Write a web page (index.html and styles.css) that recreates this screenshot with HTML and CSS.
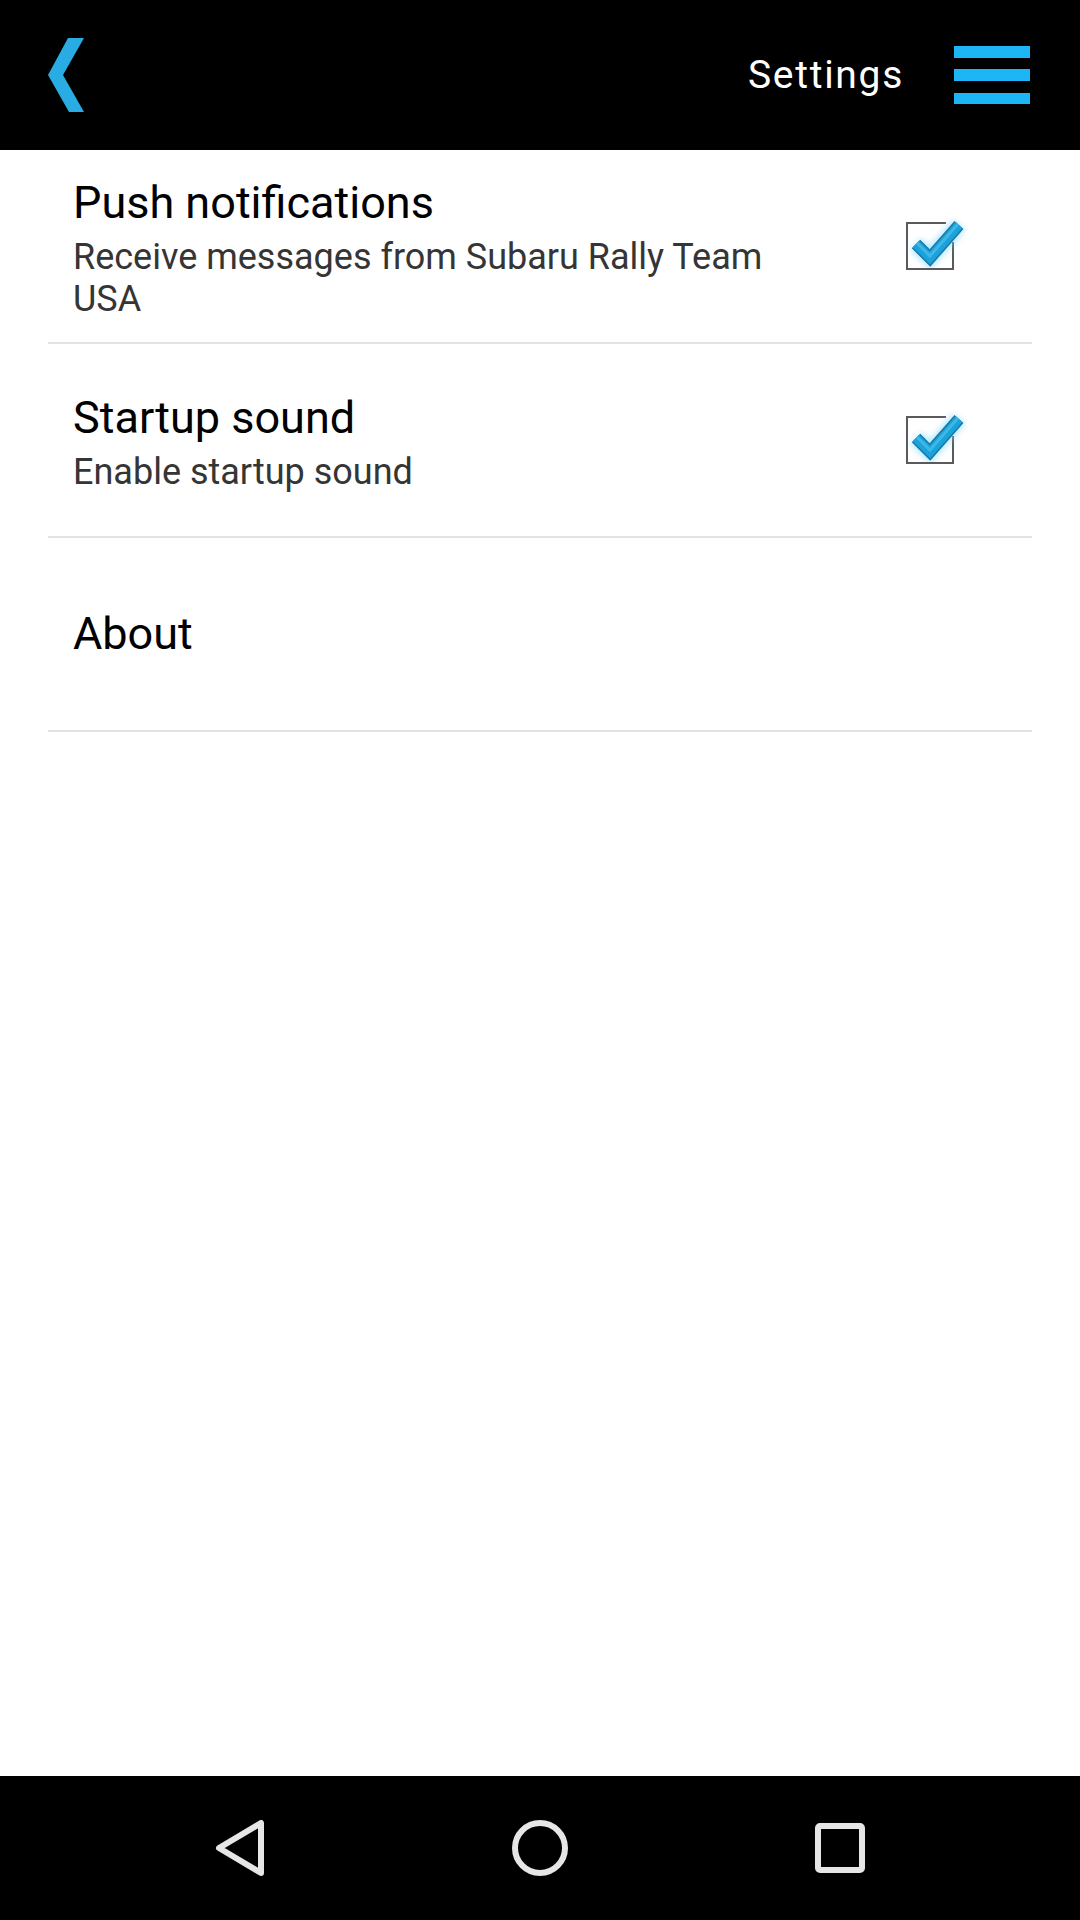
FILE: index.html
```html
<!doctype html>
<html>
  <head>
    <title>Settings</title>
    <meta name="viewport" content="initial-scale=1, maximum-scale=1">
    <link rel="stylesheet" href="styles.css">
  </head>
  <body>
    <div class=bar>
      <svg class=back width=40 height=80 viewBox="0 0 40 80">
        <polygon points="22,3 38,3 17,40 38,77 23,77 2,40" fill="#28ace3"/>
      </svg>
      <span class=title>Settings</span>
      <svg class=menu width=76 height=58 viewBox="0 0 76 58">
        <rect x=0 y=0 width=76 height=12 fill="#1cb5f6"/>
        <rect x=0 y=23 width=76 height=12 fill="#1cb5f6"/>
        <rect x=0 y=47 width=76 height=11 fill="#1cb5f6"/>
      </svg>
    </div>

    <div class=list>
      <div class=row>
        <div class=text>
          <div class=name>Push notifications</div>
          <div class=sub>Receive messages from Subaru Rally Team USA</div>
        </div>
        <svg class=check width=64 height=60 viewBox="0 0 64 60">
          <use href="#tick"/>
        </svg>
      </div>
      <div class=row>
        <div class=text>
          <div class=name>Startup sound</div>
          <div class=sub>Enable startup sound</div>
        </div>
        <svg class=check width=64 height=60 viewBox="0 0 64 60">
          <use href="#tick"/>
        </svg>
      </div>
      <div class=row>
        <div class=text>
          <div class=name>About</div>
        </div>
      </div>
    </div>

    <div class=nav>
      <svg width=56 height=56 viewBox="0 0 56 56">
        <polygon points="7,28 49,3 49,53" fill=none stroke="#e6e6e6" stroke-width=6 stroke-linejoin=round />
      </svg>
      <svg width=56 height=56 viewBox="0 0 56 56">
        <circle cx=28 cy=28 r=25 fill=none stroke="#e6e6e6" stroke-width=6 />
      </svg>
      <svg width=56 height=56 viewBox="0 0 56 56">
        <rect x=6 y=6 width=44 height=44 rx=2 fill=none stroke="#e6e6e6" stroke-width=6 />
      </svg>
    </div>

    <svg width=0 height=0 class=defs>
      <defs>
        <filter id=glow x="-30%" y="-30%" width="160%" height="160%">
          <feGaussianBlur stdDeviation="3"/>
        </filter>
        <g id=tick>
          <path d="M42 7 H3 V53 H49 V26" fill=none stroke="#5a5a5a" stroke-width=2 />
          <polyline points="12,28 26,42 55,9" fill=none stroke="#7fd6ff" stroke-width=16 opacity=.6 filter="url(#glow)" />
          <polyline points="12,28 26,42 55,9" fill=none stroke="#1979a3" stroke-width=12 stroke-linejoin=miter />
          <polyline points="12,28 26,42 55,9" fill=none stroke="#1ba2da" stroke-width=9 stroke-linejoin=miter />
          <polyline points="13,27 26,40 54,8" fill=none stroke="#4cc0ee" stroke-width=3 opacity=.7 />
        </g>
      </defs>
    </svg>
  </body>
</html>
```

FILE: styles.css
```css
* {
  box-sizing: border-box;
  margin: 0;
  padding: 0;
}

html, body {
  height: 100%;
  width: 100%;
}

body {
  display: flex;
  flex-direction: column;
  font-family: Roboto, "Liberation Sans", sans-serif;
  background: #fff;
}

.bar {
  flex: 0 0 150px;
  background: #000;
  display: flex;
  flex-direction: row;
  align-items: center;
  padding: 0 50px 0 46px;
}

.back {
  display: block;
}

.title {
  margin-left: auto;
  color: #fff;
  font-size: 39px;
  line-height: 39px;
  letter-spacing: 1.7px;
  padding-top: 1px;
}

.menu {
  display: block;
  margin-left: 50px;
}

.list {
  flex: 1;
  margin: 0 48px;
}

.row {
  min-height: 194px;
  display: flex;
  flex-direction: row;
  align-items: center;
  padding: 0 64px 0 25px;
  border-bottom: 2px solid #e2e2e2;
}

.text {
  flex: 1;
  padding-right: 90px;
}

.name {
  font-size: 45px;
  line-height: 60px;
  color: #000;
}

.sub {
  font-size: 36px;
  line-height: 42px;
  margin-top: 3px;
  color: #353535;
}

.check {
  display: block;
  flex: 0 0 64px;
}

.defs {
  position: absolute;
}

.nav {
  flex: 0 0 144px;
  background: #000;
  display: flex;
  flex-direction: row;
  align-items: center;
  justify-content: center;
  gap: 244px;
}

.nav svg {
  display: block;
}
```
